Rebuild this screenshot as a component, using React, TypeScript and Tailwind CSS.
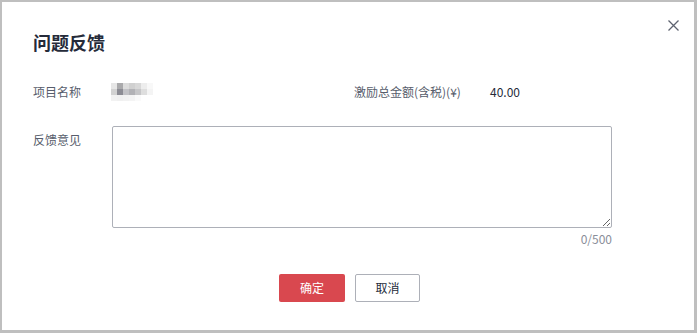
import React from "react";

const mosaic: string[][] = [
  ["#e6e6e6", "#a9a9ab", "#dcdcdc", "#d0d0d0", "#d8d8d8", "#ededed", "#f8f8f8"],
  ["#d2d2d2", "#8c8c94", "#c2c2c6", "#b2b2b6", "#c6c6c8", "#dedede", "#f4f4f4"],
  ["#f2f2f2", "#f0f0f0", "#f2f2f2", "#f4f4f4", "#fafafa", "#ffffff", "#ffffff"],
];

export default function App() {
  const font = { fontFamily: '"Noto Sans CJK SC", "Noto Sans", sans-serif' };
  return (
    <div
      className="relative w-[697px] h-[333px] bg-white border-l-2 border-t-2 border-r-[3px] border-b-[3px] border-[#bfbfbf] pl-[31px] pt-[28px]"
      style={font}
    >
      <button className="absolute top-[17px] right-[15px] w-[12px] h-[12px] flex items-center justify-center">
        <svg width="11" height="11" viewBox="0 0 11 11">
          <path d="M0.5 0.5 L10.5 10.5 M10.5 0.5 L0.5 10.5" stroke="#5e6370" strokeWidth="1.3" />
        </svg>
      </button>
      <h1 className="text-[18px] leading-[24px] font-bold text-[#252b3a]">问题反馈</h1>

      <div className="flex items-center mt-[29px] h-[18px] text-[12px] leading-[18px]">
        <div className="w-[78px] text-[#575d6c]">项目名称</div>
        <div className="flex flex-col w-[243px]">
          {mosaic.map((row, i) => (
            <div key={i} className="flex">
              {row.map((c, j) => (
                <div key={j} className="w-[6px] h-[6px]" style={{ background: c }} />
              ))}
            </div>
          ))}
        </div>
        <div className="w-[136px] text-[#575d6c]">激励总金额(含税)(¥)</div>
        <div className="text-[#252b3a]">40.00</div>
      </div>

      <div className="flex mt-[25px]">
        <div className="w-[79px] text-[12px] leading-[18px] mt-[5px] text-[#575d6c]">反馈意见</div>
        <div className="flex flex-col w-[500px]">
          <textarea
            className="w-[500px] h-[102px] border border-[#adb0b8] rounded-[2px] outline-none block"
            style={font}
          />
          <div className="text-right text-[12px] leading-[18px] mt-[2px] text-[#8a8e99]">0/500</div>
        </div>
      </div>

      <div className="flex justify-center gap-[10px] mt-[26px] pr-[28px]">
        <button className="w-[66px] h-[28px] rounded-[2px] bg-[#d9484f] text-white text-[12px]">确定</button>
        <button className="w-[65px] h-[28px] rounded-[2px] border border-[#adb0b8] text-[#252b3a] text-[12px] bg-white">取消</button>
      </div>
    </div>
  );
}
